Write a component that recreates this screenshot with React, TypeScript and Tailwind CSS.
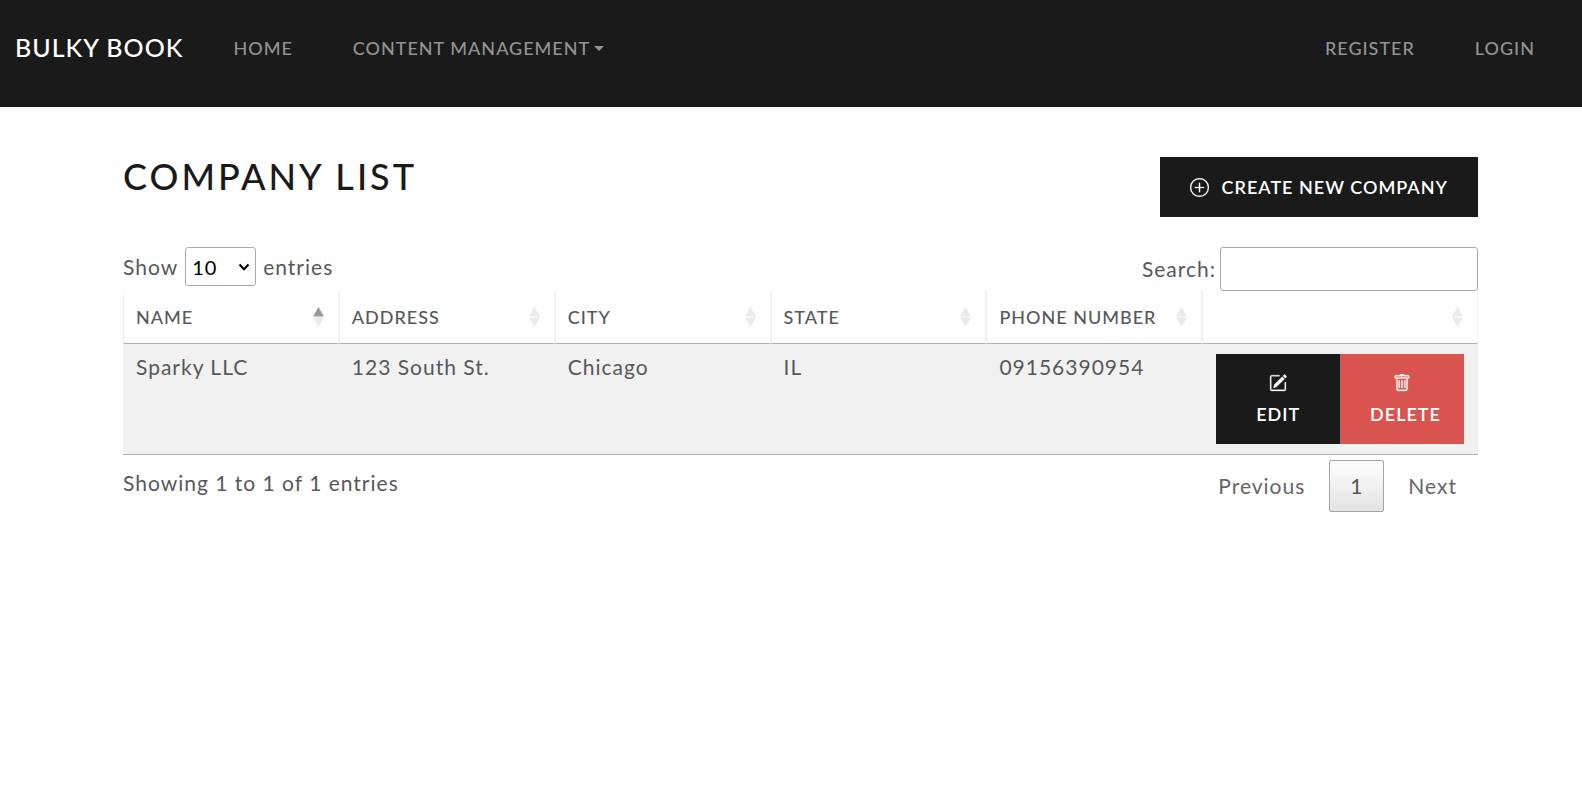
import { BsPencilSquare, BsPlusCircle, BsTrash } from "react-icons/bs";

type Company = {
  name: string;
  address: string;
  city: string;
  state: string;
  phone: string;
};

const companies: Company[] = [
  { name: "Sparky LLC", address: "123 South St.", city: "Chicago", state: "IL", phone: "09156390954" },
];

const columns = ["Name", "Address", "City", "State", "Phone Number", ""];

function SortArrows({ ascending }: { ascending: boolean }) {
  return (
    <svg width="11" height="20" viewBox="0 0 11 20" aria-hidden="true" className="shrink-0">
      <path d="M5.5 0 11 9.5H0z" fill={ascending ? "#999a9b" : "#e9eaea"} />
      <path d="M0 10.5H11L5.5 20z" fill="#e9eaea" />
    </svg>
  );
}

function NavBar() {
  const link = "px-[30px] py-4 text-[#939393] hover:text-white";
  return (
    <nav className="flex h-[107px] items-start bg-[#1a1a1a] pl-[15px] pr-[17px] pt-[21px] text-[18px] leading-[22px] font-medium uppercase">
      <a href="#" className="mr-5 py-[10px] text-[25px] leading-[32px] text-white">
        Bulky Book
      </a>
      <div className="flex flex-1">
        <a href="#" className={link}>
          Home
        </a>
        <button type="button" className="flex items-center gap-1 px-[30px] py-4 uppercase text-[#939393] hover:text-white">
          Content Management
          <svg width="10" height="5" viewBox="0 0 10 5" aria-hidden="true">
            <path d="M0 0H10L5 5z" fill="currentColor" />
          </svg>
        </button>
      </div>
      <a href="#" className={link}>
        Register
      </a>
      <a href="#" className={link}>
        Login
      </a>
    </nav>
  );
}

function CompanyTable() {
  return (
    <table className="w-full table-fixed border-separate border-spacing-0">
      <thead>
        <tr>
          {columns.map((column, index) => (
            <th
              key={column}
              aria-sort={index === 0 ? "ascending" : "none"}
              className="h-[53px] w-[15.93%] border-x border-b border-x-[#f0f0f0] border-b-[#b0b0b0] pr-[14px] pl-3 text-left text-[18px] leading-[26px] font-medium uppercase last:w-auto"
            >
              <div className="flex items-center justify-between">
                <span>{column}</span>
                <SortArrows ascending={index === 0} />
              </div>
            </th>
          ))}
        </tr>
      </thead>
      <tbody>
        {companies.map((company) => (
          <tr key={company.name} className="bg-[#f1f1f1] align-top *:border-b *:border-[#b0b0b0]">
            <td className="px-[13px] py-2">{company.name}</td>
            <td className="px-[13px] py-2">{company.address}</td>
            <td className="px-[13px] py-2">{company.city}</td>
            <td className="px-[13px] py-2">{company.state}</td>
            <td className="px-[13px] py-2">{company.phone}</td>
            <td className="px-[14px] py-[10px]">
              <div className="flex h-[90px] text-center text-[18px] leading-[26px] font-semibold text-white">
                <a href="#" className="w-1/2 bg-[#1a1a1a] px-[30px] pt-5 uppercase">
                  <BsPencilSquare size={18} className="mx-auto mb-[9px] block" stroke="currentColor" strokeWidth={0.3} />
                  Edit
                </a>
                <a href="#" className="w-1/2 bg-[#d9534f] px-[30px] pt-5 uppercase">
                  <BsTrash size={18} className="mx-auto mb-[9px] block" stroke="currentColor" strokeWidth={0.3} />
                  Delete
                </a>
              </div>
            </td>
          </tr>
        ))}
      </tbody>
    </table>
  );
}

export default function App() {
  return (
    <div className="min-h-screen bg-white font-['Lato',sans-serif] text-[21px] leading-[30px] tracking-[1px] text-[#55595c]">
      <NavBar />
      <main className="pt-[50px] pr-[104px] pl-[123px]">
        <div className="flex items-start justify-between">
          <h1 className="text-[36px] leading-[38px] font-medium tracking-[3px] text-[#1a1a1a] uppercase">Company List</h1>
          <a
            href="#"
            className="flex h-[60px] items-center gap-[13px] bg-[#1a1a1a] px-[30px] text-[18px] font-semibold text-white uppercase"
          >
            <BsPlusCircle size={19} stroke="currentColor" strokeWidth={0.2} />
            Create New Company
          </a>
        </div>
        <div className="mt-[30px] flex items-start justify-between">
          <label className="flex h-[39px] items-center gap-[7px] leading-[26px]">
            Show
            <span className="relative">
              <select
                className="block h-[39px] w-[71px] appearance-none rounded-[3px] border border-[#aaa] px-1.5 text-[20px] text-black"
                defaultValue="10"
              >
                <option>10</option>
                <option>25</option>
                <option>50</option>
                <option>100</option>
              </select>
              <svg
                width="12"
                height="8"
                viewBox="0 0 12 8"
                fill="none"
                aria-hidden="true"
                className="pointer-events-none absolute top-4 right-1.5"
              >
                <path d="M1.500 1.500 6 6.200 10.500 1.500" stroke="#000" strokeWidth="2" />
              </svg>
            </span>
            entries
          </label>
          <label className="flex h-11 items-center gap-1">
            Search:
            <input type="search" className="h-11 w-[258px] rounded-[3px] border border-[#aaa] px-2" />
          </label>
        </div>
        <CompanyTable />
        <div className="flex items-start justify-between pt-[5px]">
          <p className="py-2">Showing 1 to 1 of 1 entries</p>
          <div className="flex h-[52px] items-stretch text-[#666]">
            <button type="button" className="px-6">
              Previous
            </button>
            <button type="button" className="w-[55px] rounded-[2px] border border-[#a5a5a5] bg-linear-to-b from-white to-[#e2e2e2] text-[#555]">
              1
            </button>
            <button type="button" className="pr-[21px] pl-6">
              Next
            </button>
          </div>
        </div>
      </main>
    </div>
  );
}
